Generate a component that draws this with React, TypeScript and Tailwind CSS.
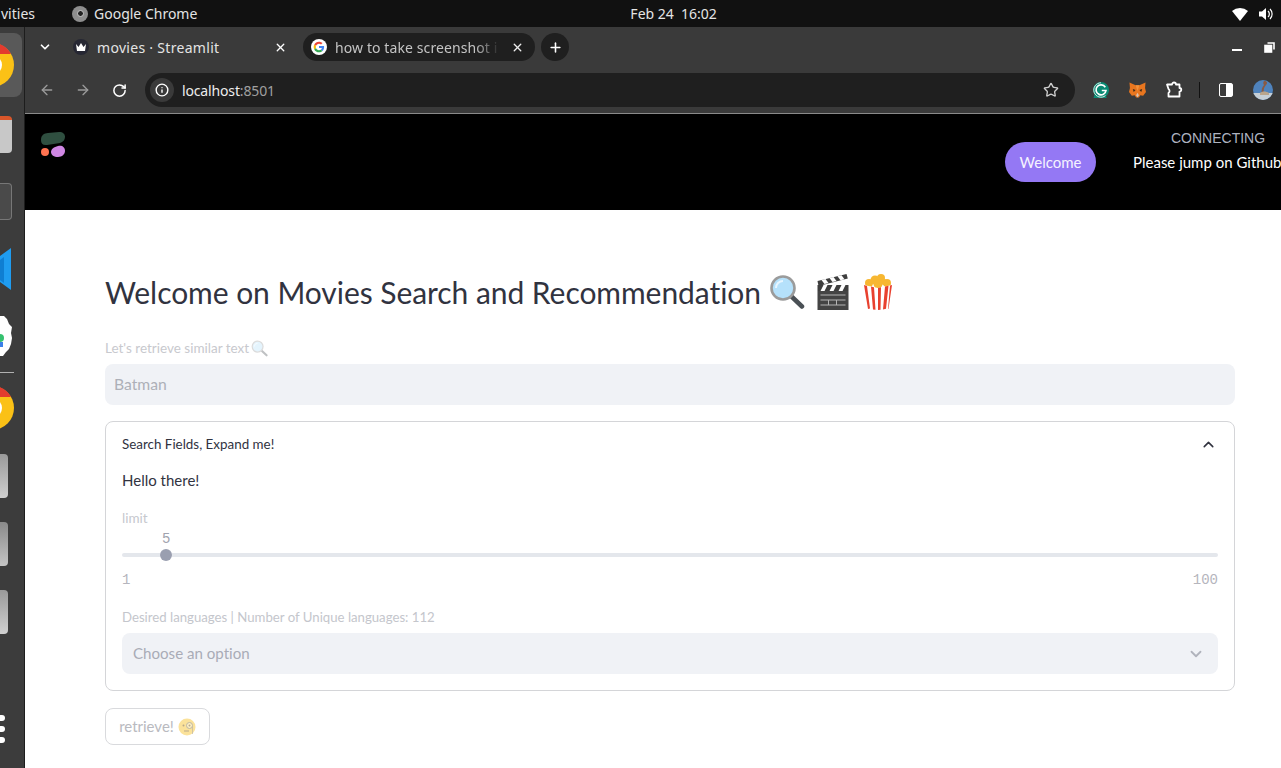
import React from "react";
import { ArrowLeft, ArrowRight, RotateCw, Star, ChevronDown, ChevronUp, X, Plus, Info } from "lucide-react";

const ui = "font-['Noto_Sans',sans-serif]";
const st = "font-['Lato',sans-serif] [font-variant-ligatures:none]";

function Chrome({ size = 44 }: { size?: number }) {
  return (
    <svg width={size} height={size} viewBox="0 0 44 44">
      <circle cx="22" cy="22" r="22" fill="#fbc116" />
      <path d="M22 0A22 22 0 0 1 41 11L22 11 4 9A22 22 0 0 1 22 0Z" fill="#e33b2e" />
      <path d="M4 9 14 27 24 44A22 22 0 0 1 4 9Z" fill="#2fa84f" />
      <circle cx="22" cy="22" r="10" fill="#fff" />
      <circle cx="22" cy="22" r="8" fill="#4285f4" />
    </svg>
  );
}

function GoogleG() {
  return (
    <svg width="16" height="16" viewBox="0 0 48 48">
      <circle cx="24" cy="24" r="24" fill="#fff" />
      <g transform="translate(8 8) scale(.667)">
        <path fill="#EA4335" d="M24 9.5c3.5 0 6.6 1.2 9.1 3.6l6.8-6.8C35.8 2.4 30.4 0 24 0 14.6 0 6.5 5.4 2.6 13.2l7.9 6.2C12.4 13.7 17.7 9.5 24 9.5z" />
        <path fill="#4285F4" d="M46.9 24.5c0-1.6-.1-3.1-.4-4.5H24v9h12.9c-.6 3-2.2 5.5-4.8 7.2l7.7 6c4.5-4.2 7.1-10.3 7.1-17.7z" />
        <path fill="#FBBC05" d="M10.5 28.6c-.5-1.5-.8-3-.8-4.6s.3-3.1.8-4.6l-7.9-6.2C.9 16.5 0 20.1 0 24s.9 7.5 2.6 10.8l7.9-6.2z" />
        <path fill="#34A853" d="M24 48c6.5 0 11.9-2.1 15.9-5.8l-7.7-6c-2.2 1.4-4.9 2.3-8.2 2.3-6.3 0-11.6-4.2-13.5-9.9l-7.9 6.2C6.5 42.6 14.6 48 24 48z" />
      </g>
    </svg>
  );
}

function Magnifier({ size = 36, faded = false }: { size?: number; faded?: boolean }) {
  return (
    <svg width={size} height={size} viewBox="0 0 36 36" className={faded ? "opacity-35" : ""}>
      <path d="M21.5 21.5 33 32.5" stroke="#4a5055" strokeWidth="4.5" strokeLinecap="round" />
      <circle cx="14" cy="14" r="11.5" fill="#b5e1fb" stroke="#9b9b9b" strokeWidth="2.6" />
      <path d="M7 14a7 7 0 0 1 7-7" stroke="#e8f6ff" strokeWidth="2" fill="none" />
    </svg>
  );
}

function Clapper() {
  return (
    <svg width="33" height="36" viewBox="0 0 32 36">
      <path d="M1 7 30 0l1.3 4.5L2 12z" fill="#3e3e3e" />
      <path d="M5 6 9 5l3 4-4 1zM13 4l4-1 3 4-4 1zM21 2.200l4-1 3 4-4 1z" fill="#fff" />
      <rect x="1" y="11" width="31" height="6" fill="#3e3e3e" />
      <path d="M4 17l3-6h4l-3 6zM13 17l3-6h4l-3 6zM22 17l3-6h4l-3 6z" fill="#fff" />
      <rect x="1" y="17" width="31" height="19" fill="#444" />
      <path d="M4 21h25M4 26h25M4 31h25M12 26v5M20 26v5" stroke="#b4b4b4" strokeWidth="1" />
    </svg>
  );
}

function Popcorn() {
  return (
    <svg width="30" height="36" viewBox="0 0 30 36">
      <g fill="#f7b731">
        <circle cx="6" cy="9" r="4" /><circle cx="12" cy="6" r="4.500" /><circle cx="18" cy="4" r="4" />
        <circle cx="24" cy="9" r="4" /><circle cx="15" cy="10" r="4.500" /><circle cx="21" cy="8" r="3" />
      </g>
      <path d="M1 11 15 14 29 11 25 35 15 36 5 35Z" fill="#fff" />
      <path d="M1 11 4 12 7 34.500 5 35ZM8 12.600 11 13.300 12.500 35.700 10 35.500ZM15 14 18 13.300 17.500 35.800 15 36ZM22 12.600 25.500 11.800 23 34.800 20 35.400ZM27 11.400 29 11 25.500 34.700 25 35Z" fill="#e8412f" />
    </svg>
  );
}

function Monocle() {
  return (
    <svg width="18" height="18" viewBox="0 0 18 18">
      <circle cx="9" cy="9" r="8.500" fill="#fbe29a" />
      <circle cx="5.500" cy="7.500" r="1" fill="#b9a98a" />
      <circle cx="11.500" cy="7.500" r="3" fill="#fdf0c4" stroke="#bdb6a3" strokeWidth="1" />
      <circle cx="11.500" cy="7.500" r="1" fill="#b9a98a" />
      <path d="M6 13h5" stroke="#b9a98a" strokeWidth="1" />
      <path d="M14.500 8.500V16" stroke="#bdb6a3" strokeWidth=".7" />
    </svg>
  );
}

function Fox() {
  return (
    <svg width="17" height="16" viewBox="0 0 18 16">
      <path d="M0.500 0 7 3h4L17.500 0 17 6l1 4-3 4-3-.5L10.500 16h-3L6 13.500 3 14 0 10l1-4z" fill="#e8761f" />
      <path d="M4 7l3 1-2 2zM14 7l-3 1 2 2z" fill="#3b2a1a" />
      <path d="M7.500 13.500 9 11l1.500 2.500-1.500 2.500z" fill="#d7c1b0" />
      <path d="M7 3h4L9 9z" fill="#f2923a" />
    </svg>
  );
}

function Grammarly() {
  return (
    <svg width="16" height="16" viewBox="0 0 16 16">
      <path d="M8 0a8 8 0 0 1 8 8c0 2.500-1.200 4.800-3 6.200l.8 1.800H.5l1-3.500A8 8 0 0 1 8 0z" fill="#0a8a73" />
      <path d="M8 .8A7.200 7.200 0 1 0 12.500 13.600" fill="none" stroke="#fff" strokeWidth=".8" />
      <path d="M12.300 5.200A5 5 0 1 0 13 8.500H8.800" fill="none" stroke="#fff" strokeWidth="1.700" />
    </svg>
  );
}

function Extension() {
  return (
    <svg width="18" height="18" viewBox="0 0 18 18" fill="none" stroke="#fff" strokeWidth="1.800" strokeLinejoin="round">
      <path d="M2 3.500h5a2 2 0 0 1 4 0H14.500V7a1.800 1.800 0 0 1 0 3.600V15.500H3.500V12A2.400 2.400 0 0 0 3.500 8Z" />
    </svg>
  );
}

function Avatar() {
  return (
    <svg width="20" height="20" viewBox="0 0 20 20" className="shrink-0">
      <clipPath id="av"><circle cx="10" cy="10" r="10" /></clipPath>
      <g clipPath="url(#av)">
        <rect width="20" height="20" fill="#4f83bd" />
        <rect y="13" width="20" height="7" fill="#c6cfd6" />
        <path d="M11 1c3 0 4 2 2 4-2 2-3 5-2 9H9c-1-4 0-7 2-9-1-1-1-3 0-4Z" fill="#8a5a44" />
        <path d="M7 13c2-2 6-2 9 0v2H7Z" fill="#b9a58c" />
      </g>
    </svg>
  );
}

function Dock() {
  return (
    <aside className="w-[25px] shrink-0 flex flex-col bg-[#3c3c3c] border-r border-[#1d1d1d] overflow-hidden">
      <div className="mt-[6px] w-[22px] h-[64px] rounded-r-lg bg-[#595959] flex items-center justify-end pr-[8px] shrink-0">
        <div className="shrink-0"><Chrome /></div>
      </div>
      <div className="mt-[19px] w-[12px] h-[37px] rounded-r bg-[#c8c8c8] border-t-[4px] border-[#d9562a] shrink-0" />
      <div className="mt-[30px] w-[12px] h-[37px] rounded-r bg-[#4a4a4a] border border-l-0 border-[#777] shrink-0" />
      <div className="mt-[28px] w-[11px] h-[42px] shrink-0">
        <svg width="11" height="42" viewBox="0 0 11 42"><path d="M0 8 11 0v42L0 34Z" fill="#1f9cf0" /><path d="M0 12 4 9v26l-4-3Z" fill="#0f7ed2" /></svg>
      </div>
      <div className="mt-[26px] w-[12px] h-[40px] shrink-0">
        <svg width="12" height="40" viewBox="0 0 12 40"><path d="M0 0h4l3 3 2 5 3 3-1 6 1 5-1 6-2 5-3 3-3 4H0Z" fill="#fff" /><circle cx="0" cy="22" r="4" fill="#35c16f" /><path d="M0 26h3v5H0Z" fill="#3b7fe8" /></svg>
      </div>
      <div className="mt-[16px] w-[14px] h-px bg-[#b0b0b0] shrink-0" />
      <div className="mt-[13px] w-[14px] h-[44px] flex justify-end shrink-0">
        <div className="shrink-0"><Chrome /></div>
      </div>
      <div className="mt-[24px] w-[8px] h-[44px] rounded-r bg-gradient-to-b from-[#9a9a9a] to-[#cfcfcf] shrink-0" />
      <div className="mt-[24px] w-[8px] h-[44px] rounded-r bg-gradient-to-b from-[#8a8a8a] to-[#c4c4c4] shrink-0" />
      <div className="mt-[24px] w-[8px] h-[44px] rounded-r bg-gradient-to-b from-[#9a9a9a] to-[#d0d0d0] shrink-0" />
      <div className="mt-[81px] flex flex-col gap-[5px] shrink-0">
        <div className="w-[5px] h-[6px] rounded-r-sm bg-white" />
        <div className="w-[5px] h-[6px] rounded-r-sm bg-white" />
        <div className="w-[5px] h-[6px] rounded-r-sm bg-white" />
      </div>
    </aside>
  );
}

function TabStrip() {
  return (
    <div className={`h-[40px] bg-[#3a3a3a] flex items-center ${ui} text-[14px] shrink-0`}>
      <ChevronDown size={14} strokeWidth={3} className="ml-[13px] text-white" />
      <div className="ml-[21px] w-[16px] h-[16px] rounded-full bg-[#262733] flex items-center justify-center">
        <svg width="10" height="8" viewBox="0 0 10 8"><path d="M0 1 2.500 4 5 0 7.500 4 10 1 9 8H1Z" fill="#fff" /></svg>
      </div>
      <span className="ml-[8px] w-[177px] text-[#e4e4e4] tracking-[0.3px]">movies · Streamlit</span>
      <X size={13} strokeWidth={2.5} className="text-white" />
      <div className="ml-[16px] h-[28px] w-[232px] rounded-full bg-[#1f1f1f] flex items-center pl-[8px]">
        <GoogleG />
        <span className="ml-[8px] w-[165px] whitespace-nowrap overflow-hidden text-[#c4c4c4] tracking-[0.1px] [mask-image:linear-gradient(to_right,black_85%,transparent)]">how to take screenshot i</span>
        <X size={13} strokeWidth={2.5} className="ml-[11px] text-[#eee]" />
      </div>
      <div className="ml-[6px] h-[28px] w-[28px] rounded-full bg-[#1f1f1f] flex items-center justify-center">
        <Plus size={15} strokeWidth={2.5} className="text-white" />
      </div>
      <div className="ml-auto flex items-center gap-[22px] pr-[6px]">
        <div className="w-[10px] h-[2px] bg-white mt-[6px]" />
        <svg width="11" height="11" viewBox="0 0 11 11" fill="none" stroke="#fff" strokeWidth="1.600"><rect x="1" y="3.500" width="6.500" height="6.500" fill="#fff" /><path d="M3.500 1h6.500v6.500" /></svg>
      </div>
    </div>
  );
}

function Toolbar() {
  return (
    <div className={`h-[47px] bg-[#3a3a3a] border-b border-[#8a8a8a] flex items-center ${ui} shrink-0`}>
      <ArrowLeft size={16} strokeWidth={2} className="ml-[14px] text-[#9b9b9b]" />
      <ArrowRight size={16} strokeWidth={2} className="ml-[20px] text-[#9b9b9b]" />
      <RotateCw size={15} strokeWidth={2.4} className="ml-[21px] text-white" />
      <div className="ml-[18px] h-[34px] w-[930px] rounded-full bg-[#1f1f1f] flex items-center pl-[5px]">
        <div className="w-[24px] h-[24px] rounded-full bg-[#3a3a3a] flex items-center justify-center">
          <Info size={14} strokeWidth={2.4} className="text-white" />
        </div>
        <span className="ml-[8px] text-[14px] text-[#ededed] tracking-[-0.15px]">localhost<span className="text-[#a0a0a0]">:8501</span></span>
        <Star size={16} strokeWidth={2} className="ml-auto mr-[16px] text-[#cfcfcf]" />
      </div>
      <div className="ml-[18px]"><Grammarly /></div>
      <div className="ml-[20px]"><Fox /></div>
      <div className="ml-[19px]"><Extension /></div>
      <div className="ml-[16px] w-px h-[16px] bg-[#111]" />
      <div className="ml-[19px] w-[14px] h-[14px] rounded-[2px] border-[1.500px] border-white bg-gradient-to-r from-transparent from-50% to-white to-50%" />
      <div className="ml-[20px]"><Avatar /></div>
    </div>
  );
}

function Header() {
  return (
    <header className="h-[96px] bg-black flex shrink-0 overflow-hidden">
      <div className="ml-[16px] mt-[18px] shrink-0">
        <svg width="24" height="25" viewBox="0 0 24 25">
          <path d="M0 8C0 3 3 1.500 7 1L18 0c4 0 6 2 6 5s-2 5-5 6L6 13c-4 .5-6-1-6-5Z" fill="#2f4f40" />
          <circle cx="4" cy="20" r="4" fill="#ff7350" />
          <path d="M10 20c0-3 3-5 7-6 4-1 7 1 7 5 0 3-3 6-7 6s-7-2-7-5Z" fill="#cf87e4" />
        </svg>
      </div>
      <div className="ml-auto flex shrink-0">
        <div className={`mt-[28px] h-[40px] w-[91px] rounded-full bg-[#9478f4] flex items-center justify-center text-[15px] text-[#f5f3ff] ${st}`}>Welcome</div>
        <div className="ml-[37px] w-[148px] overflow-hidden">
          <div className="mt-[15px] pl-[38px] text-[14px] leading-[18px] text-[#aeb3c0] font-['Liberation_Sans',sans-serif] whitespace-nowrap">CONNECTING</div>
          <div className={`mt-[3px] text-[15px] leading-[24px] text-white whitespace-nowrap ${st}`}>Please jump on Github</div>
        </div>
      </div>
    </header>
  );
}

function Main() {
  return (
    <main className={`flex-1 bg-white pl-[80px] pr-[46px] pt-[58px] ${st}`}>
      <h1 className="h-[48px] flex items-center text-[30px] tracking-[-0.05px] text-[#31333f] font-normal whitespace-nowrap">
        <span>Welcome on Movies Search and Recommendation</span>
        <span className="ml-[8px] flex items-center">
          <Magnifier />
          <span className="ml-[11px]"><Clapper /></span>
          <span className="ml-[14px]"><Popcorn /></span>
        </span>
      </h1>
      <div className="mt-[23px] h-[18px] flex items-center text-[13.500px] text-[#c8c9ce]">
        Let's retrieve similar text
        <span className="ml-[2px]"><Magnifier size={17} faded /></span>
      </div>
      <div className="mt-[7px] h-[41px] rounded-lg bg-[#f0f2f6] flex items-center px-[9px] text-[15.700px] text-[#adb0b8]">Batman</div>
      <section className="mt-[16px] h-[270px] rounded-lg border border-[#d4d5d8] px-[16px]">
        <div className="h-[44px] flex items-center justify-between text-[13.400px] text-[#31333f]">
          <span>Search Fields, Expand me!</span>
          <ChevronUp size={17} strokeWidth={2.2} className="mr-[1px]" />
        </div>
        <p className="mt-[2px] h-[24px] leading-[24px] text-[15px] text-[#31333f]">Hello there!</p>
        <div className="mt-[17px] h-[18px] leading-[18px] text-[13.500px] text-[#c6c8ce]">limit</div>
        <div className="mt-[3px] pl-[40px] h-[18px] leading-[18px] text-[14px] text-[#a0a3ae] font-['Liberation_Mono',monospace]">5</div>
        <div className="mt-[1px] h-[12px] flex items-center">
          <div className="h-[4px] w-[38px] bg-[#e4e7ec] rounded-l-full" />
          <div className="w-[12px] h-[12px] rounded-full bg-[#9a9fb0]" />
          <div className="h-[4px] flex-1 bg-[#e4e7ec] rounded-r-full" />
        </div>
        <div className="mt-[10px] flex justify-between h-[18px] leading-[18px] text-[14px] text-[#b5b5bd] font-['Liberation_Mono',monospace]">
          <span>1</span><span>100</span>
        </div>
        <div className="mt-[19px] h-[18px] leading-[18px] text-[13.200px] text-[#c4c6cc]">Desired languages | Number of Unique languages: 112</div>
        <div className="mt-[7px] h-[41px] rounded-lg bg-[#f0f2f6] flex items-center justify-between pl-[11px] pr-[13px] text-[15.100px] text-[#a9acb6]">
          <span>Choose an option</span>
          <ChevronDown size={18} strokeWidth={2.4} className="text-[#b0b3bc]" />
        </div>
      </section>
      <button className="mt-[17px] h-[37px] w-[105px] rounded-lg border border-[#d9dadd] flex items-center justify-center gap-[4px] text-[15px] text-[#b9bac0]">
        retrieve! <Monocle />
      </button>
    </main>
  );
}

export default function App() {
  return (
    <div className="w-[1281px] h-[768px] overflow-hidden flex flex-col bg-[#111]">
      <div className={`h-[27px] shrink-0 bg-[#111111] flex items-center text-[14px] text-[#e4e4e4] ${ui}`}>
        <span className="w-[35px] overflow-hidden whitespace-nowrap flex justify-end shrink-0">vities</span>
        <span className="ml-[37px] w-[16px] h-[16px] rounded-full bg-[#8e8e8e] flex items-center justify-center"><span className="w-[7px] h-[7px] rounded-full bg-[#222] border border-[#ccc]" /></span>
        <span className="ml-[6px]">Google Chrome</span>
        <span className="ml-[433px]">Feb 24&nbsp;&nbsp;16:02</span>
        <span className="ml-auto mr-[7px] flex items-center gap-[11px]">
          <svg width="16" height="14" viewBox="0 0 16 14"><path d="M0 4a12 12 0 0 1 16 0L8 14Z" fill="#fff" /></svg>
          <svg width="15" height="14" viewBox="0 0 15 14"><path d="M0 4.500h3L7 1v12L3 9.500H0Z" fill="#fff" /><path d="M9 4a4 4 0 0 1 0 6M11 2a7 7 0 0 1 0 10" stroke="#fff" fill="none" strokeWidth="1.200" /></svg>
        </span>
      </div>
      <div className="flex flex-1 min-h-0">
        <Dock />
        <div className="flex-1 min-w-0 flex flex-col">
          <TabStrip />
          <Toolbar />
          <Header />
          <Main />
        </div>
      </div>
    </div>
  );
}
